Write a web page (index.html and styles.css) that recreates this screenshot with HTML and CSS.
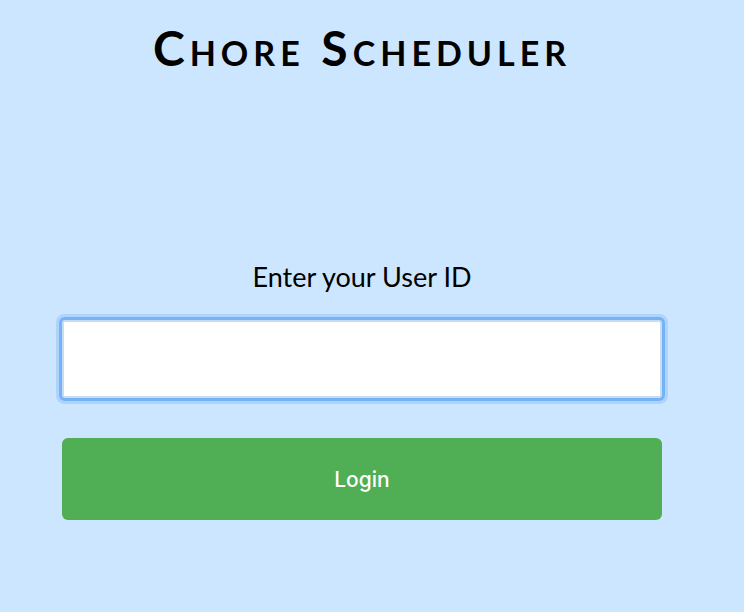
FILE: index.html
```html
<!DOCTYPE html>
<html>
<head>
<meta charset="utf-8">
<link rel="stylesheet" href="styles.css">
</head>
<body>
<main class="page">
  <h1 class="title">Chore Scheduler</h1>
  <form class="login">
    <label class="label" for="uid">Enter your User ID</label>
    <input class="input" id="uid" type="text">
    <button class="button" type="button">Login</button>
  </form>
</main>
</body>
</html>
```
FILE: styles.css
```css
html, body {
  margin: 0;
  padding: 0;
  background: #cce6ff;
}
.page {
  width: 600px;
  margin-left: 62px;
  display: flex;
  flex-direction: column;
}
.title {
  margin: 22px 0 0 0;
  font-family: "Lato", "DejaVu Sans", sans-serif;
  font-weight: 700;
  font-size: 48px;
  line-height: 52px;
  font-variant: small-caps;
  letter-spacing: 5px;
  text-align: center;
  color: #000;
}
.login {
  display: flex;
  flex-direction: column;
  margin-top: 188px;
}
.label {
  font-family: "Lato", "Open Sans", sans-serif;
  font-size: 27px;
  line-height: 30px;
  text-align: center;
  color: #000;
}
.input {
  margin-top: 28px;
  box-sizing: border-box;
  width: 100%;
  height: 78px;
  border: 2px solid #c6dcf2;
  border-radius: 3px;
  background: #fff;
  box-shadow: 0 0 0 3px #76b3f6, 0 0 0 6px rgba(118, 179, 246, 0.35);
  outline: none;
}
.button {
  margin-top: 40px;
  height: 82px;
  width: 100%;
  border: none;
  border-radius: 6px;
  background: #50ae55;
  color: #fff;
  font-family: "Inter", "Open Sans", sans-serif;
  font-size: 21px;
  font-weight: 500;
}
```
